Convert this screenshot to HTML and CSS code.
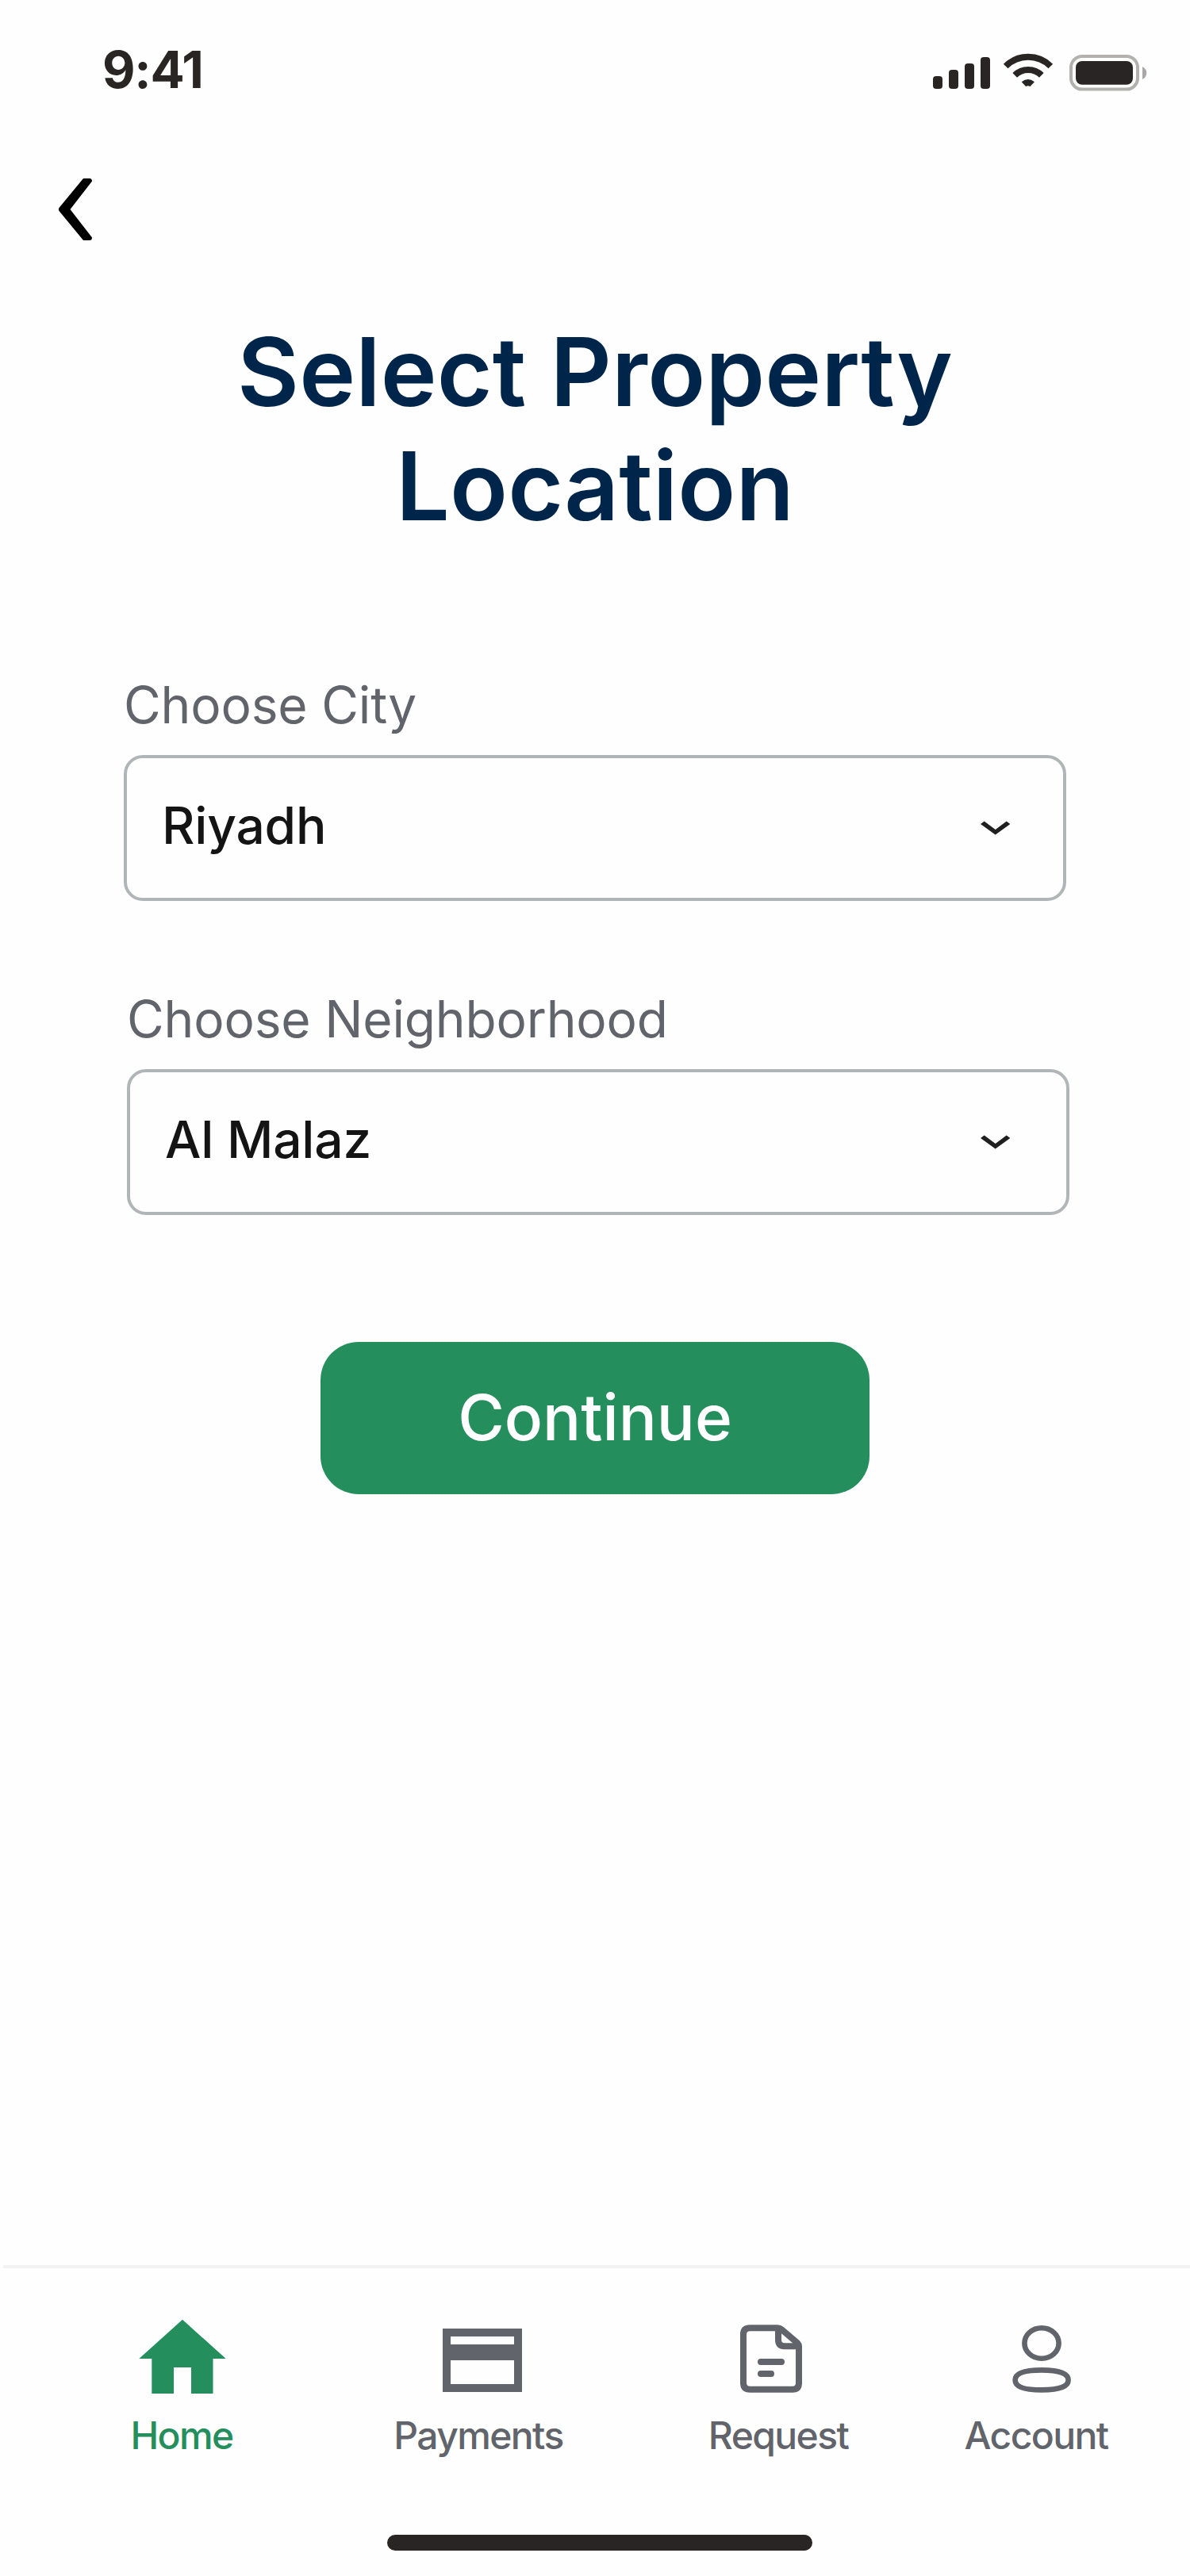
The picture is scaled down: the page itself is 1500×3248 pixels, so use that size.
FILE: index.html
```html
<!DOCTYPE html>
<html lang="en">
<head>
<meta charset="utf-8">
<title>Select Property Location</title>
<link rel="stylesheet" href="styles.css">
</head>
<body>
<div class="screen">
  <header class="status">
    <span class="time">9:41</span>
    <svg class="status-icons" viewBox="1176 64 272 56" width="272" height="56" aria-hidden="true">
      <g fill="#292524">
        <rect x="1176" y="96" width="12" height="16" rx="4"/>
        <rect x="1196" y="88" width="12" height="24" rx="4"/>
        <rect x="1216" y="80" width="12" height="32" rx="4"/>
        <rect x="1236" y="72" width="12" height="40" rx="4"/>
        <path d="M1287.7 103.3Q1295.8 96.7 1304 103.3L1298.5 109Q1295.8 107.4 1293 109Z"/>
      </g>
      <g fill="none" stroke="#292524" stroke-width="8">
        <path d="M1267.7 83.5A40 40 0 0 1 1324.3 83.5"/>
        <path d="M1279.2 94.8A24 24 0 0 1 1312.8 94.8"/>
      </g>
      <rect x="1350" y="71" width="84" height="41.6" rx="14" fill="none" stroke="#b2b1b0" stroke-width="4"/>
      <rect x="1356" y="77" width="72" height="29.800" rx="8" fill="#292524"/>
      <path d="M1440 84Q1445.3 87 1445.3 92T1440 100Z" fill="#a9a7a7"/>
    </svg>
  </header>
  <button class="back" aria-label="Back">
    <svg viewBox="0 0 42 78" width="42" height="78"><path d="M31 0H39Q42 0 42 3.5L14.5 39L42 74.500Q42 78 39 78H31L.5 41Q-.5 39 .5 37Z"/></svg>
  </button>
  <main>
    <h1>Select Property<br>Location</h1>
    <section class="field">
      <label class="label">Choose City</label>
      <div class="select"><span class="value">Riyadh</span>
        <svg viewBox="0 0 38 18" width="38" height="18"><path d="M4.700 .6L18.700 11L32.700 .6L37.300 4L18.700 17.600L0 4Z"/></svg>
      </div>
    </section>
    <section class="field second">
      <label class="label">Choose Neighborhood</label>
      <div class="select"><span class="value">Al Malaz</span>
        <svg viewBox="0 0 38 18" width="38" height="18"><path d="M4.700 .6L18.700 11L32.700 .6L37.300 4L18.700 17.600L0 4Z"/></svg>
      </div>
    </section>
    <button class="continue">Continue</button>
  </main>
  <nav class="tabs">
    <a class="tab home">
      <svg viewBox="175 2920 110 100" width="110" height="100"><path d="M230 2924.700L284.700 2974H268.500V3018H241V2985H219V3018H191.300V2974H175.300Z"/></svg>
      <span>Home</span>
    </a>
    <a class="tab payments">
      <svg viewBox="558 2920 100 100" width="100" height="100"><path fill-rule="evenodd" d="M558 2936H658V3016H558ZM568 2946V2956H648V2946ZM568 2976V3006H648V2976Z"/></svg>
      <span>Payments</span>
    </a>
    <a class="tab request">
      <svg viewBox="930 2920 84 100" width="84" height="100"><g fill="none" stroke="#61646b" stroke-width="8" stroke-linecap="round" stroke-linejoin="round"><path d="M945.500 2935.300H980Q983 2935.300 985 2937L1005 2954Q1007 2956 1007 2958.500V3004.500Q1007 3012.700 999 3012.700H945.500Q937 3012.700 937 3004.500V2943.500Q937 2935.300 945.500 2935.300Z"/><path d="M981 2936V2950Q981 2958.300 989 2958.300H1006"/><path d="M959 2978H985M959 2993H972"/></g></svg>
      <span>Request</span>
    </a>
    <a class="tab account">
      <svg viewBox="1275 2920 76 100" width="76" height="100"><g fill="none" stroke="#61646b" stroke-width="6.600"><ellipse cx="1313" cy="2954.500" rx="21.600" ry="19.300"/><path d="M1313 2988.400C1336 2988.400 1346.600 2993 1346.600 3000.900S1336 3013.400 1313 3013.400S1279.600 3008.800 1279.600 3000.900S1290 2988.400 1313 2988.400Z"/></g></svg>
      <span>Account</span>
    </a>
  </nav>
  <div class="indicator"></div>
</div>
</body>
</html>
```
FILE: styles.css
```css
* { box-sizing: border-box; }
body { margin: 0; background: #fefefe; font-family: Inter, sans-serif; }
button { border: 0; padding: 0; font-family: inherit; }
svg { display: block; flex: none; }
.screen { width: 1500px; height: 3248px; display: flex; flex-direction: column; overflow: hidden; }
.status { height: 176px; padding: 49px 52px 0 129px; display: flex; justify-content: space-between; }
.time { font-size: 64px; line-height: 78px; font-weight: 700; letter-spacing: -1.2px; color: #292524; }
.status-icons { margin-top: 15px; }
.back { margin: 49px 0 0 74px; width: 42px; height: 78px; background: none; }
main { flex: 1; display: flex; flex-direction: column; align-items: center; }
h1 { margin: 94px 0 0; font-size: 120px; line-height: 144px; font-weight: 600; letter-spacing: 0.1px; color: #00254b; text-align: center; white-space: nowrap; }
.field { width: 1188px; margin-top: 165px; display: flex; flex-direction: column; }
.field.second { margin: 110px 0 0 8px; }
.label { font-size: 64px; line-height: 78px; height: 102px; letter-spacing: -0.17px; color: #61646b; white-space: nowrap; }
.select { height: 184px; border: 4px solid #b0b6b8; border-radius: 24px; padding: 0 66px 0 44px; display: flex; align-items: center; justify-content: space-between; fill: #1f1f1f; }
.second .select { padding-right: 70px; }
.value { margin-bottom: 7px; font-size: 64px; line-height: 78px; font-weight: 500; letter-spacing: -0.2px; color: #141414; }
.continue { margin-top: 160px; width: 692px; height: 192px; flex: none; border-radius: 48px; padding-bottom: 2px; background: #248e5d; color: #fff; font-size: 80px; line-height: 96px; font-weight: 500; }
.tabs { height: 320px; flex: none; margin-left: 4px; border-top: 4px solid #f2f2f2; padding-top: 60px; display: flex; }
.tab { display: flex; flex-direction: column; align-items: center; gap: 22px; font-size: 48px; line-height: 58px; font-weight: 500; letter-spacing: -1.6px; color: #61646b; fill: currentColor; white-space: nowrap; }
.tab span { margin-right: 2px; }
.tab.home { color: #248e5d; width: 130px; margin-left: 161px; }
.payments { width: 220px; margin-left: 199px; }
.payments svg { margin-left: 8px; }
.request { width: 180px; margin-left: 178px; }
.request svg { margin-right: 20px; }
.account { width: 190px; margin-left: 140px; }
.account svg { margin-left: 12px; }
.indicator { width: 536px; height: 20px; flex: none; margin: 20px 0 32px 488px; border-radius: 10px; background: #292524; }
```
